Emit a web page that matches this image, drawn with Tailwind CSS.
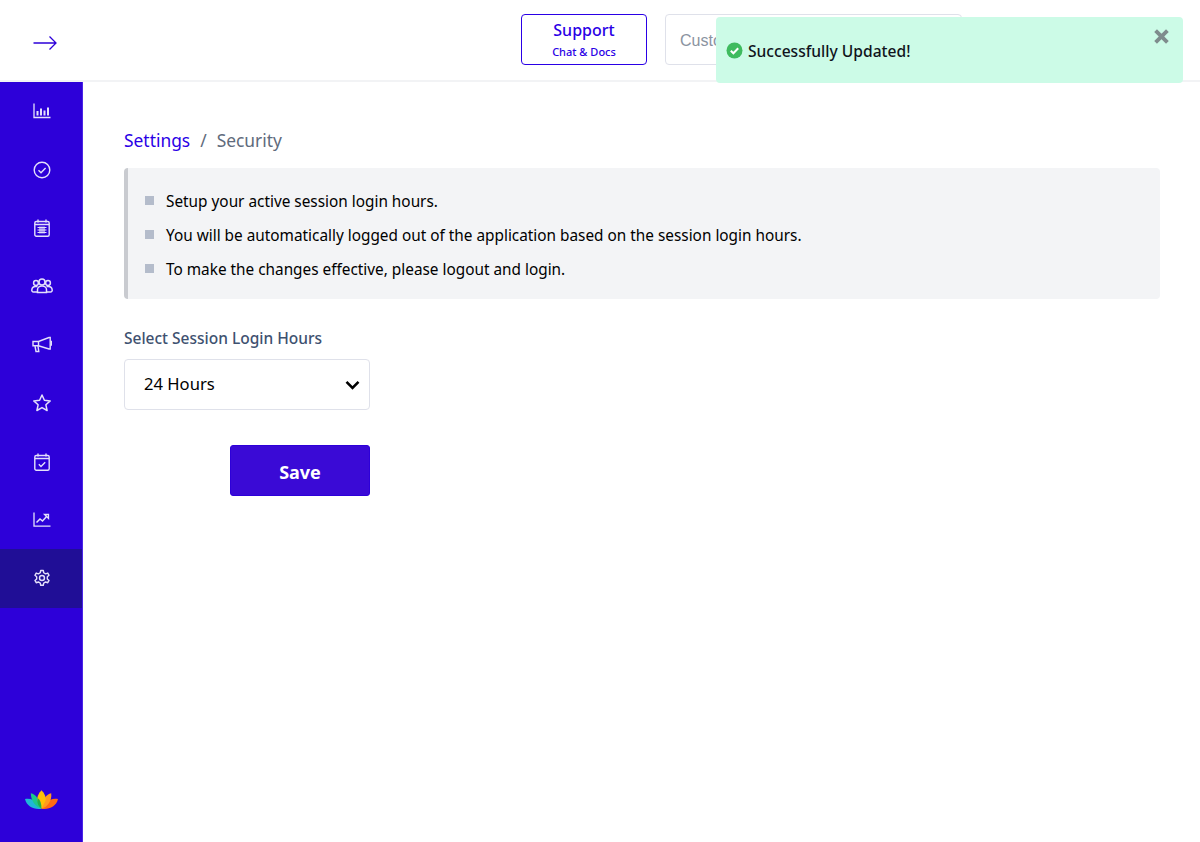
<!DOCTYPE html>
<html lang="en">

<head>
    <meta charset="UTF-8" />
    <title>Settings - Security</title>
    <script src="https://cdn.jsdelivr.net/npm/@tailwindcss/browser@4"></script>
</head>

<body class="bg-white font-['Noto_Sans',sans-serif] text-black overflow-hidden">
    <div class="relative w-[1200px] h-[842px] flex flex-col">

        <!-- top bar -->
        <header class="h-[82px] shrink-0 flex items-center border-b-2 border-[#f2f3f5] bg-white">
            <div class="w-[83px] flex justify-center pl-[7px] pt-[5px]">
                <svg width="24" height="14" viewBox="0 0 24 14" fill="none" stroke="#2d00d9" stroke-width="1.3">
                    <path d="M.5 7h22.500M16.500 .5l6.500 6.500-6.500 6.500" />
                </svg>
            </div>
            <a class="ml-[438px] mt-[-1px] w-[126px] h-[51px] flex flex-col items-center justify-center rounded border border-[#2a00e6] text-[#2a00e6]">
                <span class="text-[16px] leading-[22px] font-medium">Support</span>
                <span class="text-[11px] leading-[16px] mt-[3px] font-medium">Chat &amp; Docs</span>
            </a>
            <div class="ml-[18px] mt-[-1px] w-[297px] h-[51px] flex items-center pl-[14px] pt-[2px] rounded border border-[#dfe1ea] text-[16px] text-[#8b93a1] font-['Liberation_Sans',sans-serif]">Customer</div>
        </header>

        <div class="flex flex-1 min-h-0">
            <!-- sidebar -->
            <aside class="w-[83px] shrink-0 flex flex-col bg-[#2d00d9] border-r border-[#4a25e6] pt-[-1px]">
                <div class="h-[58.4px] flex items-center justify-center pl-[1px]">
                    <svg width="18" height="16" viewBox="0 0 18 16" fill="none" stroke="#e4e0fb" stroke-width="1.3"><path d="M1 .5V14.500H17.500" /><path d="M4.500 8v4.500M8 5.500v7M11.500 7.500v5M15 4.500v8" stroke-width="2" /></svg>
                </div>
                <div class="h-[58.4px] flex items-center justify-center pl-[1px]">
                    <svg width="18" height="18" viewBox="0 0 18 18" fill="none" stroke="#e4e0fb" stroke-width="1.400"><circle cx="9" cy="9" r="7.800" /><path d="M5.500 9.300l2.500 2.400 4.600-4.800" /></svg>
                </div>
                <div class="h-[58.4px] flex items-center justify-center pl-[1px]">
                    <svg width="16" height="18" viewBox="0 0 16 18" fill="none" stroke="#e4e0fb" stroke-width="1.400"><rect x=".8" y="2.500" width="14.400" height="14.700" rx="1.500" /><path d="M4 .5v3M12 .5v3M1 5.500h14" /><path d="M3.500 8.500h9M3.500 11h9M3.500 13.500h9M6 7.500v7M8 7.500v7M10 7.500v7" stroke-width="1.200" /></svg>
                </div>
                <div class="h-[58.4px] flex items-center justify-center pl-[1px]">
                    <svg width="22" height="16" viewBox="0 0 22 16" fill="none" stroke="#e4e0fb" stroke-width="1.500"><circle cx="11" cy="4" r="3" /><circle cx="5" cy="5" r="2.400" /><circle cx="17" cy="5" r="2.400" /><path d="M6.500 14.500v-3c0-2 2-3.500 4.500-3.500s4.500 1.500 4.500 3.500v3z" /><path d="M6 14H2.500C1.300 14 .7 13 .8 12c.2-2 1.800-3.500 3.700-3.500h2M16 14h3.500c1.200 0 1.800-1 1.700-2-.2-2-1.800-3.500-3.700-3.500h-2" /></svg>
                </div>
                <div class="h-[58.4px] flex items-center justify-center pl-[1px]">
                    <svg width="20" height="17" viewBox="0 0 20 17" fill="none" stroke="#e4e0fb" stroke-width="1.400"><path d="M1 5.500h5.500L17 1.500h1.200v11.500H17L6.500 9.800H1z" /><path d="M6.500 5.500v4.300M3 10l1 5.500h2.800L6 10" /><path d="M18.500 5.500h1v3.500h-1" /></svg>
                </div>
                <div class="h-[58.4px] flex items-center justify-center pl-[1px]">
                    <svg width="18" height="18" viewBox="0 0 18 18" fill="none" stroke="#e4e0fb" stroke-width="1.500" stroke-linejoin="round"><path d="M9 1l2.400 5.300 5.800.6-4.300 3.900 1.200 5.700L9 13.600 3.900 16.500l1.200-5.700L.8 6.900l5.800-.6z" /></svg>
                </div>
                <div class="h-[58.4px] flex items-center justify-center pl-[1px]">
                    <svg width="16" height="18" viewBox="0 0 16 18" fill="none" stroke="#e4e0fb" stroke-width="1.400"><rect x=".8" y="2.500" width="14.400" height="14.700" rx="1.500" /><path d="M4 .5v3M12 .5v3M1 5.500h14" /><path d="M4.800 11.200l2.200 2.200 4.200-4.200" /></svg>
                </div>
                <div class="h-[58.4px] flex items-center justify-center pl-[1px]">
                    <svg width="18" height="15" viewBox="0 0 18 15" fill="none" stroke="#e4e0fb" stroke-width="1.300"><path d="M1 .5V14.200H17.500" /><path d="M3.500 10.500l3.500-3.500 2.500 2 4.500-5" stroke-width="1.500" /><path d="M11.500 2.500h4v4z" /></svg>
                </div>
                <div class="h-[58.4px] flex items-center justify-center pl-[1px] bg-[#200e96]">
                    <svg width="18" height="18" viewBox="0 0 24 24" fill="none" stroke="#e4e0fb" stroke-width="1.900" stroke-linejoin="round"><path d="M10.300 2h3.400l.6 3 2.500 1.400 2.900-1 1.700 3-2.300 2v2.900l2.300 2-1.700 3-2.900-1-2.500 1.400-.6 3h-3.400l-.6-3-2.500-1.400-2.900 1-1.700-3 2.300-2v-2.900l-2.300-2 1.700-3 2.900 1 2.500-1.400z" /><circle cx="12" cy="12" r="3.300" /></svg>
                </div>
                <div class="mt-auto mb-[32px] flex justify-center">
                    <svg width="33" height="20" viewBox="0 0 34 20">
                        <path d="M0 9c5-1 10 1 12 4l5 6c-8 1-15-2-17-10z" fill="#1fb8d8" />
                        <path d="M6 3c5 1 9 6 11 16C11 17 6 11 6 3z" fill="#1dc98a" />
                        <path d="M34 9c-5-1-10 1-12 4l-5 6c8 1 15-2 17-10z" fill="#ff6a13" />
                        <path d="M27 3c-5 1-9 6-10 16 6-2 11-8 10-16z" fill="#ff9a1f" />
                        <path d="M17 0c-3 3-5 7-4 11l4 8 4-8c1-4-1-8-4-11z" fill="#ffc107" />
                        <path d="M13 8c3 2 4 6 4 11-3-2-5-6-4-11z" fill="#22b04a" />
                    </svg>
                </div>
            </aside>

            <!-- content -->
            <main class="flex-1 pl-[41px] pr-[40px] pt-[45px]">
                <div class="flex items-center h-[26px] text-[17.400px]">
                    <a class="text-[#2a00e6]">Settings</a>
                    <span class="mx-[10px] text-[#5f6b7c]">/</span>
                    <span class="text-[#5f6b7c]">Security</span>
                </div>

                <ul class="mt-[15px] h-[131px] flex flex-col justify-center gap-[10px] rounded border-l-4 border-[#c9cbd0] bg-[#f3f4f6] pl-[17px] pt-[2px] text-[15.350px] leading-[24px]">
                    <li class="flex items-center gap-[12px]"><span class="w-[9px] h-[9px] bg-[#b4bccb]"></span>Setup your active session login hours.</li>
                    <li class="flex items-center gap-[12px]"><span class="w-[9px] h-[9px] bg-[#b4bccb]"></span>You will be automatically logged out of the application based on the session login hours.</li>
                    <li class="flex items-center gap-[12px]"><span class="w-[9px] h-[9px] bg-[#b4bccb]"></span>To make the changes effective, please logout and login.</li>
                </ul>

                <label class="block mt-[28px] text-[15.500px] leading-[22px] font-medium text-[#3e5170]">Select Session Login Hours</label>
                <div class="mt-[10px] w-[246px] h-[51px] flex items-center justify-between pl-[19px] pr-[9px] rounded border border-[#dfe1ea] text-[16.600px]">
                    <span class="mt-[-1px]">24 Hours</span>
                    <svg width="15" height="10" viewBox="0 0 15 10" fill="none" stroke="#000" stroke-width="2.600"><path d="M1.500 1.800l6 6 6-6" /></svg>
                </div>
                <div class="w-[246px] flex justify-end mt-[35px]">
                    <button class="w-[140px] h-[51px] pt-[3px] rounded-[3px] bg-[#3a0ad6] border border-[#2d00d9] text-white text-[18px] font-bold">Save</button>
                </div>
            </main>
        </div>

        <!-- toast -->
        <div class="absolute left-[716px] top-[17px] w-[467px] h-[66px] rounded bg-[#ccfbe7] flex items-start pl-[10px] pt-[23px]">
            <svg class="mt-[2px]" width="17" height="17" viewBox="0 0 17 17"><circle cx="8.500" cy="8.500" r="8" fill="#3fbb5f" /><path d="M4.800 8.700l2.600 2.600 4.800-5" fill="none" stroke="#fff" stroke-width="2" /></svg>
            <span class="ml-[5px] text-[15.600px] leading-[22px] font-medium text-[#10141c]">Successfully Updated!</span>
            <svg class="absolute right-[14px] top-[12px]" width="15" height="15" viewBox="0 0 14 14" fill="none" stroke="#7f8c8d" stroke-width="3.600"><path d="M1.500 1.500l11 11M12.500 1.500l-11 11" /></svg>
        </div>
    </div>
</body>

</html>
